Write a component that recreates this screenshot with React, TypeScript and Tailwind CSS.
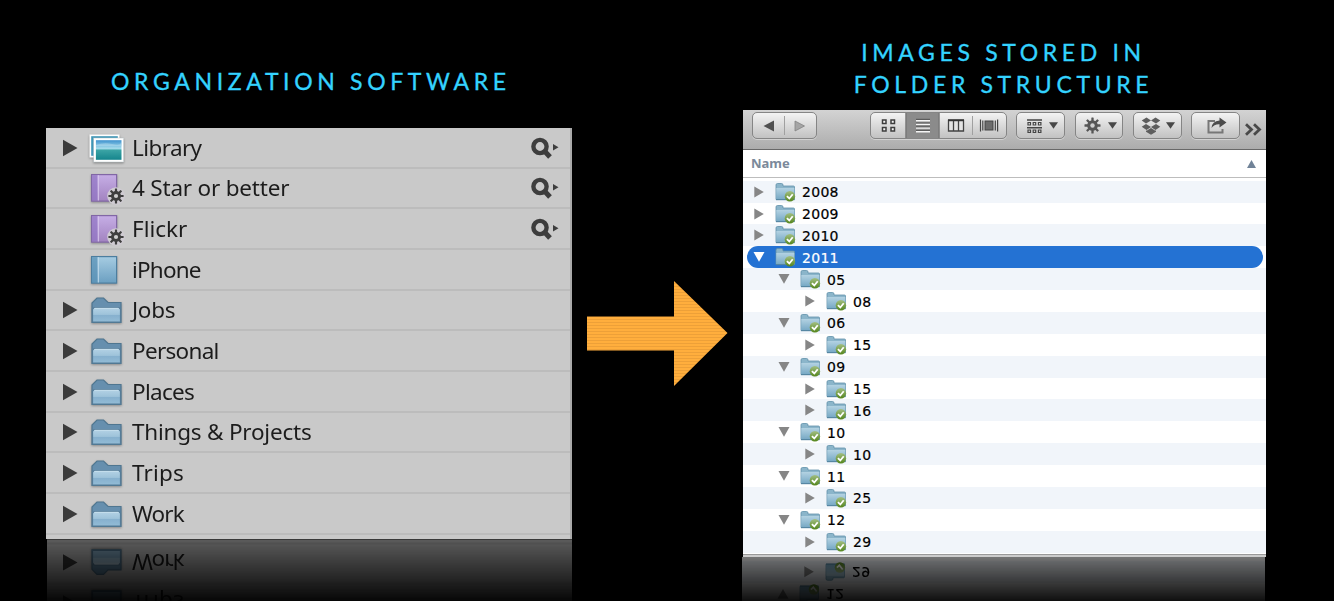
import React from "react";

type Kind = "library" | "smart" | "album" | "folder";
const sources: { label: string; kind: Kind; open: boolean; search?: boolean; tracking: string }[] = [
  { label: "Library", kind: "library", open: true, search: true, tracking: "tracking-[-0.6px]" },
  { label: "4 Star or better", kind: "smart", open: false, search: true, tracking: "tracking-[-0.2px]" },
  { label: "Flickr", kind: "smart", open: false, search: true, tracking: "tracking-[0px]" },
  { label: "iPhone", kind: "album", open: false, tracking: "tracking-[-0.8px]" },
  { label: "Jobs", kind: "folder", open: true, tracking: "tracking-[-0.3px]" },
  { label: "Personal", kind: "folder", open: true, tracking: "tracking-[-0.7px]" },
  { label: "Places", kind: "folder", open: true, tracking: "tracking-[-0.7px]" },
  { label: "Things & Projects", kind: "folder", open: true, tracking: "tracking-[-0.22px]" },
  { label: "Trips", kind: "folder", open: true, tracking: "tracking-[0.2px]" },
  { label: "Work", kind: "folder", open: true, tracking: "tracking-[-0.9px]" },
];

function Defs() {
  return (
    <svg className="absolute size-0" aria-hidden="true">
      <defs>
        <linearGradient id="sea" x1="0" y1="0" x2="0" y2="1">
          <stop offset="0" stopColor="#3f93cf" />
          <stop offset=".42" stopColor="#a6dcec" />
          <stop offset=".52" stopColor="#3aa3a4" />
          <stop offset="1" stopColor="#15858d" />
        </linearGradient>
        <linearGradient id="violet" x1="0" y1="0" x2="0" y2="1">
          <stop offset="0" stopColor="#c6aee6" />
          <stop offset="1" stopColor="#a283c0" />
        </linearGradient>
        <linearGradient id="azure" x1="0" y1="0" x2="0" y2="1">
          <stop offset="0" stopColor="#a6cce2" />
          <stop offset="1" stopColor="#6b9fc1" />
        </linearGradient>
        <linearGradient id="front" x1="0" y1="0" x2="0" y2="1">
          <stop offset="0" stopColor="#b4d2e5" />
          <stop offset=".48" stopColor="#9ec3da" />
          <stop offset=".52" stopColor="#86b0ce" />
          <stop offset="1" stopColor="#93bcd6" />
        </linearGradient>
        <linearGradient id="small" x1="0" y1="0" x2="0" y2="1">
          <stop offset="0" stopColor="#b3d2e2" />
          <stop offset="1" stopColor="#76a8c4" />
        </linearGradient>
        <linearGradient id="badge" x1="0" y1="0" x2="0" y2="1">
          <stop offset="0" stopColor="#a3bf84" />
          <stop offset="1" stopColor="#55861c" />
        </linearGradient>
        <pattern id="stripes" width="4" height="3" patternUnits="userSpaceOnUse">
          <rect width="4" height="3" fill="#ffae3d" />
          <rect width="4" height="1" fill="#eda038" />
        </pattern>
      </defs>
    </svg>
  );
}

function Gear({ className, fill, halo }: { className: string; fill: string; halo?: boolean }) {
  const teeth = [0, 45, 90, 135];
  return (
    <svg viewBox="0 0 18 18" className={className}>
      {halo && <circle cx="9" cy="9" r="8.8" fill="#cfcbd2" />}
      <g fill={fill}>
        {teeth.map((a) => (
          <rect key={a} x="7.9" y="1.4" width="2.2" height="15.2" rx=".5" transform={`rotate(${a} 9 9)`} />
        ))}
        <circle cx="9" cy="9" r="5" />
      </g>
      <circle cx="9" cy="9" r="2.1" fill="#cfcfcf" />
    </svg>
  );
}

function SourceIcon({ kind }: { kind: Kind }) {
  if (kind === "library")
    return (
      <svg viewBox="0 0 36 32" className="h-8 w-9 drop-shadow-[0_1px_1px_rgba(0,0,0,.35)]">
        <rect x="1.500" y="2.500" width="30" height="23" fill="#fff" />
        <rect x="3.200" y="4.200" width="26.600" height="19.600" fill="#3f96b6" />
        <rect x="5.700" y="6" width="30" height="24" fill="#fff" stroke="#b9c4c8" strokeWidth=".5" />
        <rect x="7.900" y="8.200" width="25.600" height="19.600" fill="url(#sea)" />
        <path d="M8 13q8-3 16-1t9-1v3H8z" fill="#d5edf5" opacity=".35" />
      </svg>
    );
  if (kind === "folder")
    return (
      <svg viewBox="0 0 36 32" className="h-8 w-9 drop-shadow-[0_1px_1px_rgba(0,0,0,.3)]">
        <path d="M4 28.500V9L9 4h6.500L20 8.500h13v20z" fill="#668fae" stroke="#4f7690" strokeWidth="1.200" />
        <path d="M4.500 28V15.500L6 13.500h25l1.500 2V28z" fill="url(#front)" stroke="#557c98" strokeWidth="1.200" />
        <path d="M6.500 14.300h24" stroke="#c8e0ee" strokeWidth="1" />
      </svg>
    );
  const smart = kind === "smart";
  return (
    <div className="relative h-8 w-9">
      <svg viewBox="0 0 36 32" className="h-8 w-9 drop-shadow-[0_1px_1px_rgba(0,0,0,.3)]">
        <rect x="3.600" y="2.600" width="25" height="26.500" fill={smart ? "url(#violet)" : "url(#azure)"} stroke={smart ? "#8167a5" : "#4c7e9f"} strokeWidth="1.200" />
        <rect x="4.200" y="3.200" width="5.300" height="25.300" fill={smart ? "#9275c4" : "#5a91b6"} opacity=".75" />
        <path d="M10.300 3.200v25.300" stroke={smart ? "#d9c9ef" : "#c1dded"} strokeWidth="1" />
      </svg>
      {smart && <Gear className="absolute top-[15px] left-[19px] size-[18px]" fill="#3f3f3f" halo />}
    </div>
  );
}

function SourceRow({ item, first }: { item: (typeof sources)[number]; first?: boolean }) {
  return (
    <div className={`shrink-0 border-b-2 border-[#bcbcbc] ${first ? "h-[40.5px]" : "h-[40.7px]"}`}>
      <div className="flex h-full items-center pt-px pl-4 blur-[0.4px]">
        <div className="w-[26px]">
          {item.open && (
            <svg viewBox="0 0 16 18" className="h-[18px] w-4">
              <path d="M1 .8L15.500 9 1 17.200z" fill="#3b3b3b" />
            </svg>
          )}
        </div>
        <SourceIcon kind={item.kind} />
        <span className={`ml-2 text-[22.500px] leading-8 whitespace-pre text-[#1c1c1c] ${item.tracking}`}>{item.label}</span>
        {item.search && (
          <svg viewBox="0 0 32 26" className="mr-[11px] ml-auto h-[26px] w-8">
            <circle cx="13" cy="11.500" r="6.600" fill="none" stroke="#3d3d3d" strokeWidth="4.400" />
            <path d="M17 15.500l6 6.500" stroke="#3d3d3d" strokeWidth="5" />
            <path d="M26 9l5.500 3.200-5.500 3.200z" fill="#3d3d3d" />
          </svg>
        )}
      </div>
    </div>
  );
}

type Node = { label: string; depth: 0 | 1 | 2; open?: boolean; selected?: boolean };
const nodes: Node[] = [
  { label: "2008", depth: 0 },
  { label: "2009", depth: 0 },
  { label: "2010", depth: 0 },
  { label: "2011", depth: 0, open: true, selected: true },
  { label: "05", depth: 1, open: true },
  { label: "08", depth: 2 },
  { label: "06", depth: 1, open: true },
  { label: "15", depth: 2 },
  { label: "09", depth: 1, open: true },
  { label: "15", depth: 2 },
  { label: "16", depth: 2 },
  { label: "10", depth: 1, open: true },
  { label: "10", depth: 2 },
  { label: "11", depth: 1, open: true },
  { label: "25", depth: 2 },
  { label: "12", depth: 1, open: true },
  { label: "29", depth: 2 },
];
const indent = ["pl-[10px]", "pl-[35px]", "pl-[61px]"];

function SyncedFolder() {
  return (
    <svg viewBox="0 0 21 20" className="h-5 w-[21px]">
      <path d="M1 17.500V3q0-1.500 1.500-1.500h4Q8 1.500 8 3v1h10.500q1 0 1 1v12.500z" fill="#8bb5ca" stroke="#5f91aa" strokeWidth=".8" />
      <path d="M1.300 6h18v11.500h-18z" fill="url(#small)" />
      <path d="M1 17.700h18.500" stroke="#4f819d" strokeWidth="1" />
      <circle cx="14.900" cy="14.200" r="5.200" fill="url(#badge)" />
      <path d="M11.900 14.200l2.400 2.300 3.400-4.200" fill="none" stroke="#fff" strokeWidth="1.800" />
    </svg>
  );
}

function TreeRow({ node, tinted }: { node: Node; tinted: boolean }) {
  const color = node.selected ? "#ffffff" : "#868686";
  return (
    <div className={`h-[21.875px] shrink-0 pr-[3px] pl-1 ${tinted ? "bg-[#f1f5fa]" : "bg-white"}`}>
      <div className={`flex h-full items-center ${node.selected ? "rounded-full bg-[#2472d3] text-white" : "text-black"}`}>
        <div className={`flex items-center ${indent[node.depth]}`}>
          <div className="-ml-[4px] w-[22px]">
            <svg viewBox="0 0 12 12" className="size-3">
              <path d={node.open ? "M.500 1h11L6 10.800z" : "M1.300.500L10.800 6l-9.500 5.500z"} fill={color} />
            </svg>
          </div>
          <SyncedFolder />
          <span className="mt-px ml-1.5 font-['DejaVu_Sans','Noto_Sans',sans-serif] text-[14px] leading-5 tracking-[0.3px] [-webkit-text-stroke:0.2px_currentColor]">{node.label}</span>
        </div>
      </div>
    </div>
  );
}

const button = "flex h-[27px] items-center rounded-[5px] border border-[#858585] bg-linear-to-b from-[#f3f3f3] to-[#c2c2c2] shadow-[0_1px_0_rgba(255,255,255,.4)]";

function Caret() {
  return (
    <svg viewBox="0 0 9 7" className="h-[7px] w-[9px]">
      <path d="M0 .3h9L4.500 6.700z" fill="#484848" />
    </svg>
  );
}

function Toolbar() {
  return (
    <div className="flex h-10 shrink-0 items-start border-b border-[#686868] bg-linear-to-b from-[#d3d3d3] to-[#acacac] pt-0.5 pl-[9px]">
      <div className={`${button} w-[65px]`}>
        <svg viewBox="0 0 63 25" className="h-[25px] w-[63px]">
          <path d="M10.500 13L21 7.500v11z" fill="#505050" />
          <path d="M31.500 3v19" stroke="#a0a0a0" />
          <path d="M51.500 13l-9.500-5v10z" fill="#a5a5a5" stroke="#838383" strokeWidth=".8" />
        </svg>
      </div>
      <div className={`${button} ml-[53px] w-[137px] overflow-hidden`}>
        <svg viewBox="0 0 135 25" className="h-[25px] w-[135px]">
          <g fill="#f4f4f4" stroke="#3d3d3d" strokeWidth="1.500">
            <path d="M11.500 7H15v3.500h-3.500zM20 7h3.500v3.500H20zM11.500 14.500H15V18h-3.500zM20 14.500h3.500V18H20z" />
          </g>
          <rect x="34.500" width="34" height="25" fill="#8b8b8b" />
          <path d="M35 0v25M68 0v25" stroke="#6e6e6e" />
          <path d="M45 6.500h14M45 10.200h14M45 13.900h14M45 17.600h14" stroke="#5c5c5c" strokeWidth="1.300" />
          <path d="M45 7.700h14M45 11.400h14M45 15.100h14M45 18.800h14" stroke="#f5f5f5" strokeWidth="1.400" />
          <path d="M77.500 7.500h15V18h-15zM82.500 7.500V18M87.500 7.500V18" fill="#e4e4e4" stroke="#424242" strokeWidth="1.300" />
          <path d="M77 7.200h16" stroke="#333" strokeWidth="1.800" />
          <path d="M101.500 3v19" stroke="#a0a0a0" />
          <rect x="114" y="8" width="8" height="9" fill="#6c6c6c" stroke="#444" />
          <path d="M109.500 6.500v12M111.800 7.500v10M124.300 7.500v10M126.600 6.500v12" stroke="#444" strokeWidth="1.200" />
        </svg>
      </div>
      <div className={`${button} ml-[9px] w-[49px] justify-between pr-[6px] pl-[10px]`}>
        <svg viewBox="0 0 15 15" className="mt-px size-[15px]" fill="none" stroke="#444" strokeWidth="1.200">
          <path d="M0 1h15M0 8.800h15" strokeWidth="1.500" />
          <path d="M1 3.500h2.500V6H1zM6.200 3.500h2.500V6H6.200zM11.400 3.500h2.500V6h-2.500zM1 11h2.500v2.500H1zM6.200 11h2.500v2.500H6.200zM11.400 11h2.500v2.500h-2.500z" />
        </svg>
        <Caret />
      </div>
      <div className={`${button} ml-[10px] w-[48px] justify-between pr-[5px] pl-[7px]`}>
        <Gear className="size-[19px]" fill="#565656" />
        <Caret />
      </div>
      <div className={`${button} ml-[10px] w-[49px] justify-between pr-[6px] pl-[7px]`}>
        <svg viewBox="0 0 20 18" className="h-[18px] w-5" fill="#5d5d5d">
          <path d="M5.500.500L10 3.500 5 6.500.700 3.500zM14.500.500L19.300 3.500 15 6.500 10 3.500zM5 6.900l5 3-4.500 3L.700 9.800zM15 6.900l4.300 2.900-4.800 3.100-4.500-3z" />
          <path d="M5 13.300l.7.400L10 10.900l4.300 2.800.7-.4v1.500l-5 3-5-3z" />
        </svg>
        <Caret />
      </div>
      <div className={`${button} ml-[9px] w-[49px] pl-[15px]`}>
        <svg viewBox="0 0 20 17" className="h-[17px] w-5">
          <path d="M8 4H1.500v11.500h14V12" fill="none" stroke="#777" strokeWidth="2" />
          <path d="M4.500 11q.5-7 8-7.500V.500l7 5-7 5V7.200Q7 7 4.500 11z" fill="#4c4c4c" />
        </svg>
      </div>
      <svg viewBox="0 0 17 13" className="mt-[11px] ml-[5px] h-[13px] w-[17px]" fill="none" stroke="#494949" strokeWidth="2.800">
        <path d="M1 1.200l5.500 5.300L1 11.800M9 1.200l5.500 5.300L9 11.800" />
      </svg>
    </div>
  );
}

const heading = "font-['Lato',sans-serif] text-[23px] leading-8 tracking-[4.65px] whitespace-nowrap text-[#34d3ff] [-webkit-text-stroke:0.35px_#34d3ff]";

export default function App() {
  return (
    <main className="flex h-[601px] w-[1334px] overflow-hidden bg-black font-['Noto_Sans','Open_Sans',sans-serif]">
      <Defs />
      <section className="ml-[46px] flex w-[526px] flex-col">
        <h1 className={`h-32 shrink-0 pt-[65px] pl-[65px] ${heading}`}>ORGANIZATION SOFTWARE</h1>
        <div className="flex h-[411px] shrink-0 flex-col overflow-hidden border-r-2 border-[#aaa] bg-[#c9c9c9]">
          {sources.map((s, i) => (
            <SourceRow key={s.label} item={s} first={i === 0} />
          ))}
        </div>
        <div aria-hidden="true" className="ml-px h-[62px] overflow-hidden [mask-image:linear-gradient(180deg,rgba(0,0,0,.46),rgba(0,0,0,.03))]">
          <div className="-ml-px flex -scale-y-100 flex-col bg-[#c9c9c9] pb-[3px]">
            <SourceRow item={sources[8]} />
            <SourceRow item={sources[9]} />
          </div>
        </div>
      </section>
      <div className="mt-[280px] ml-[15px] w-[141px]">
        <svg viewBox="0 0 141 107" className="h-[107px] w-[141px]">
          <path d="M0 36.500h87V1l53.500 52L87 106V70.500H0z" fill="url(#stripes)" />
        </svg>
      </div>
      <section className="ml-[14px] flex w-[523px] flex-col">
        <h1 className={`h-[110px] shrink-0 pt-[36px] text-center ${heading}`}>
          IMAGES STORED IN
          <br />
          FOLDER STRUCTURE
        </h1>
        <div className="ml-px flex h-[447px] w-[522.5px] shrink-0 flex-col overflow-hidden bg-white">
          <Toolbar />
          <div className="flex h-[28px] shrink-0 items-center justify-between border-b border-[#bdbdbd] pr-[10px] pl-2">
            <span className="font-['Noto_Sans',sans-serif] text-[13px] font-bold text-[#7b899a]">Name</span>
            <svg viewBox="0 0 9 8" className="h-2 w-[9px]">
              <path d="M0 8L4.500 0 9 8z" fill="#718398" />
            </svg>
          </div>
          <div className="h-[2.700px] shrink-0" />
          {nodes.map((n, i) => (
            <TreeRow key={i} node={n} tinted={i % 2 === 0} />
          ))}
          <div className="mt-auto h-[3px] shrink-0 border-t border-[#999] bg-[#ccc]" />
        </div>
        <div aria-hidden="true" className="h-11 overflow-hidden [mask-image:linear-gradient(180deg,rgba(0,0,0,.46),rgba(0,0,0,.06))]">
          <div className="flex -scale-y-100 flex-col bg-white pb-1">
            <TreeRow node={nodes[15]} tinted={false} />
            <TreeRow node={nodes[16]} tinted />
          </div>
        </div>
      </section>
    </main>
  );
}
